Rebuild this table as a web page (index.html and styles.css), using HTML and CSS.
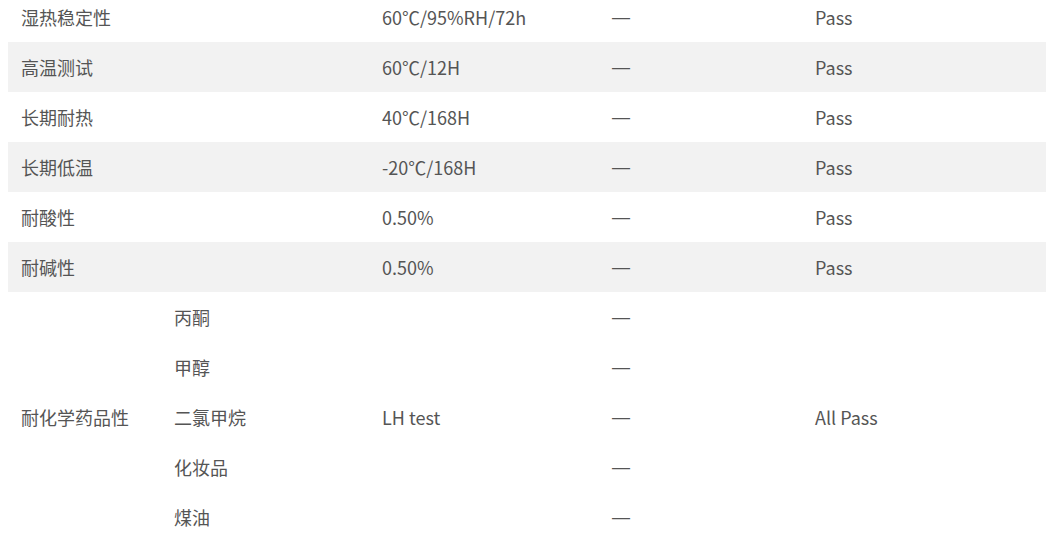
FILE: index.html
```html
<!DOCTYPE html>
<html lang="zh-CN">
<head>
<meta charset="utf-8">
<link rel="stylesheet" href="styles.css">
</head>
<body>
<table class="spec">
  <colgroup>
    <col class="c1"><col class="c2"><col class="c3"><col class="c4"><col class="c5">
  </colgroup>
  <tbody>
    <tr><td>湿热稳定性</td><td></td><td>60℃/95%RH/72h</td><td class="dash">—</td><td>Pass</td></tr>
    <tr class="alt"><td>高温测试</td><td></td><td>60℃/12H</td><td class="dash">—</td><td>Pass</td></tr>
    <tr><td>长期耐热</td><td></td><td>40℃/168H</td><td class="dash">—</td><td>Pass</td></tr>
    <tr class="alt"><td>长期低温</td><td></td><td>-20℃/168H</td><td class="dash">—</td><td>Pass</td></tr>
    <tr><td>耐酸性</td><td></td><td>0.50%</td><td class="dash">—</td><td>Pass</td></tr>
    <tr class="alt"><td>耐碱性</td><td></td><td>0.50%</td><td class="dash">—</td><td>Pass</td></tr>
    <tr><td rowspan="5">耐化学药品性</td><td>丙酮</td><td rowspan="5">LH test</td><td class="dash">—</td><td rowspan="5">All Pass</td></tr>
    <tr><td>甲醇</td><td class="dash">—</td></tr>
    <tr><td>二氯甲烷</td><td class="dash">—</td></tr>
    <tr><td>化妆品</td><td class="dash">—</td></tr>
    <tr><td>煤油</td><td class="dash">—</td></tr>
  </tbody>
</table>
</body>
</html>
```
FILE: styles.css
```css
html, body {
  margin: 0;
  padding: 0;
  background: #fff;
}
body {
  padding: 0 10px 0 8px;
  font-family: "Noto Sans CJK SC", "Noto Sans", sans-serif;
  font-size: 18px;
  color: #555;
}
.spec {
  width: 1038px;
  border-collapse: collapse;
  table-layout: fixed;
  margin-top: -8px;
}
.c1 { width: 153px; }
.c2 { width: 208px; }
.c3 { width: 230px; }
.c4 { width: 203px; }
.c5 { width: 244px; }
.spec td {
  height: 50px;
  padding: 0 0 0 13px;
  vertical-align: middle;
  line-height: 20px;
  box-sizing: border-box;
  white-space: nowrap;
}
.spec td.dash {
  font-family: "DejaVu Sans", sans-serif;
  font-size: 20px;
  padding-left: 12px;
}
.spec tr.alt td {
  background: #f2f2f2;
}
```
